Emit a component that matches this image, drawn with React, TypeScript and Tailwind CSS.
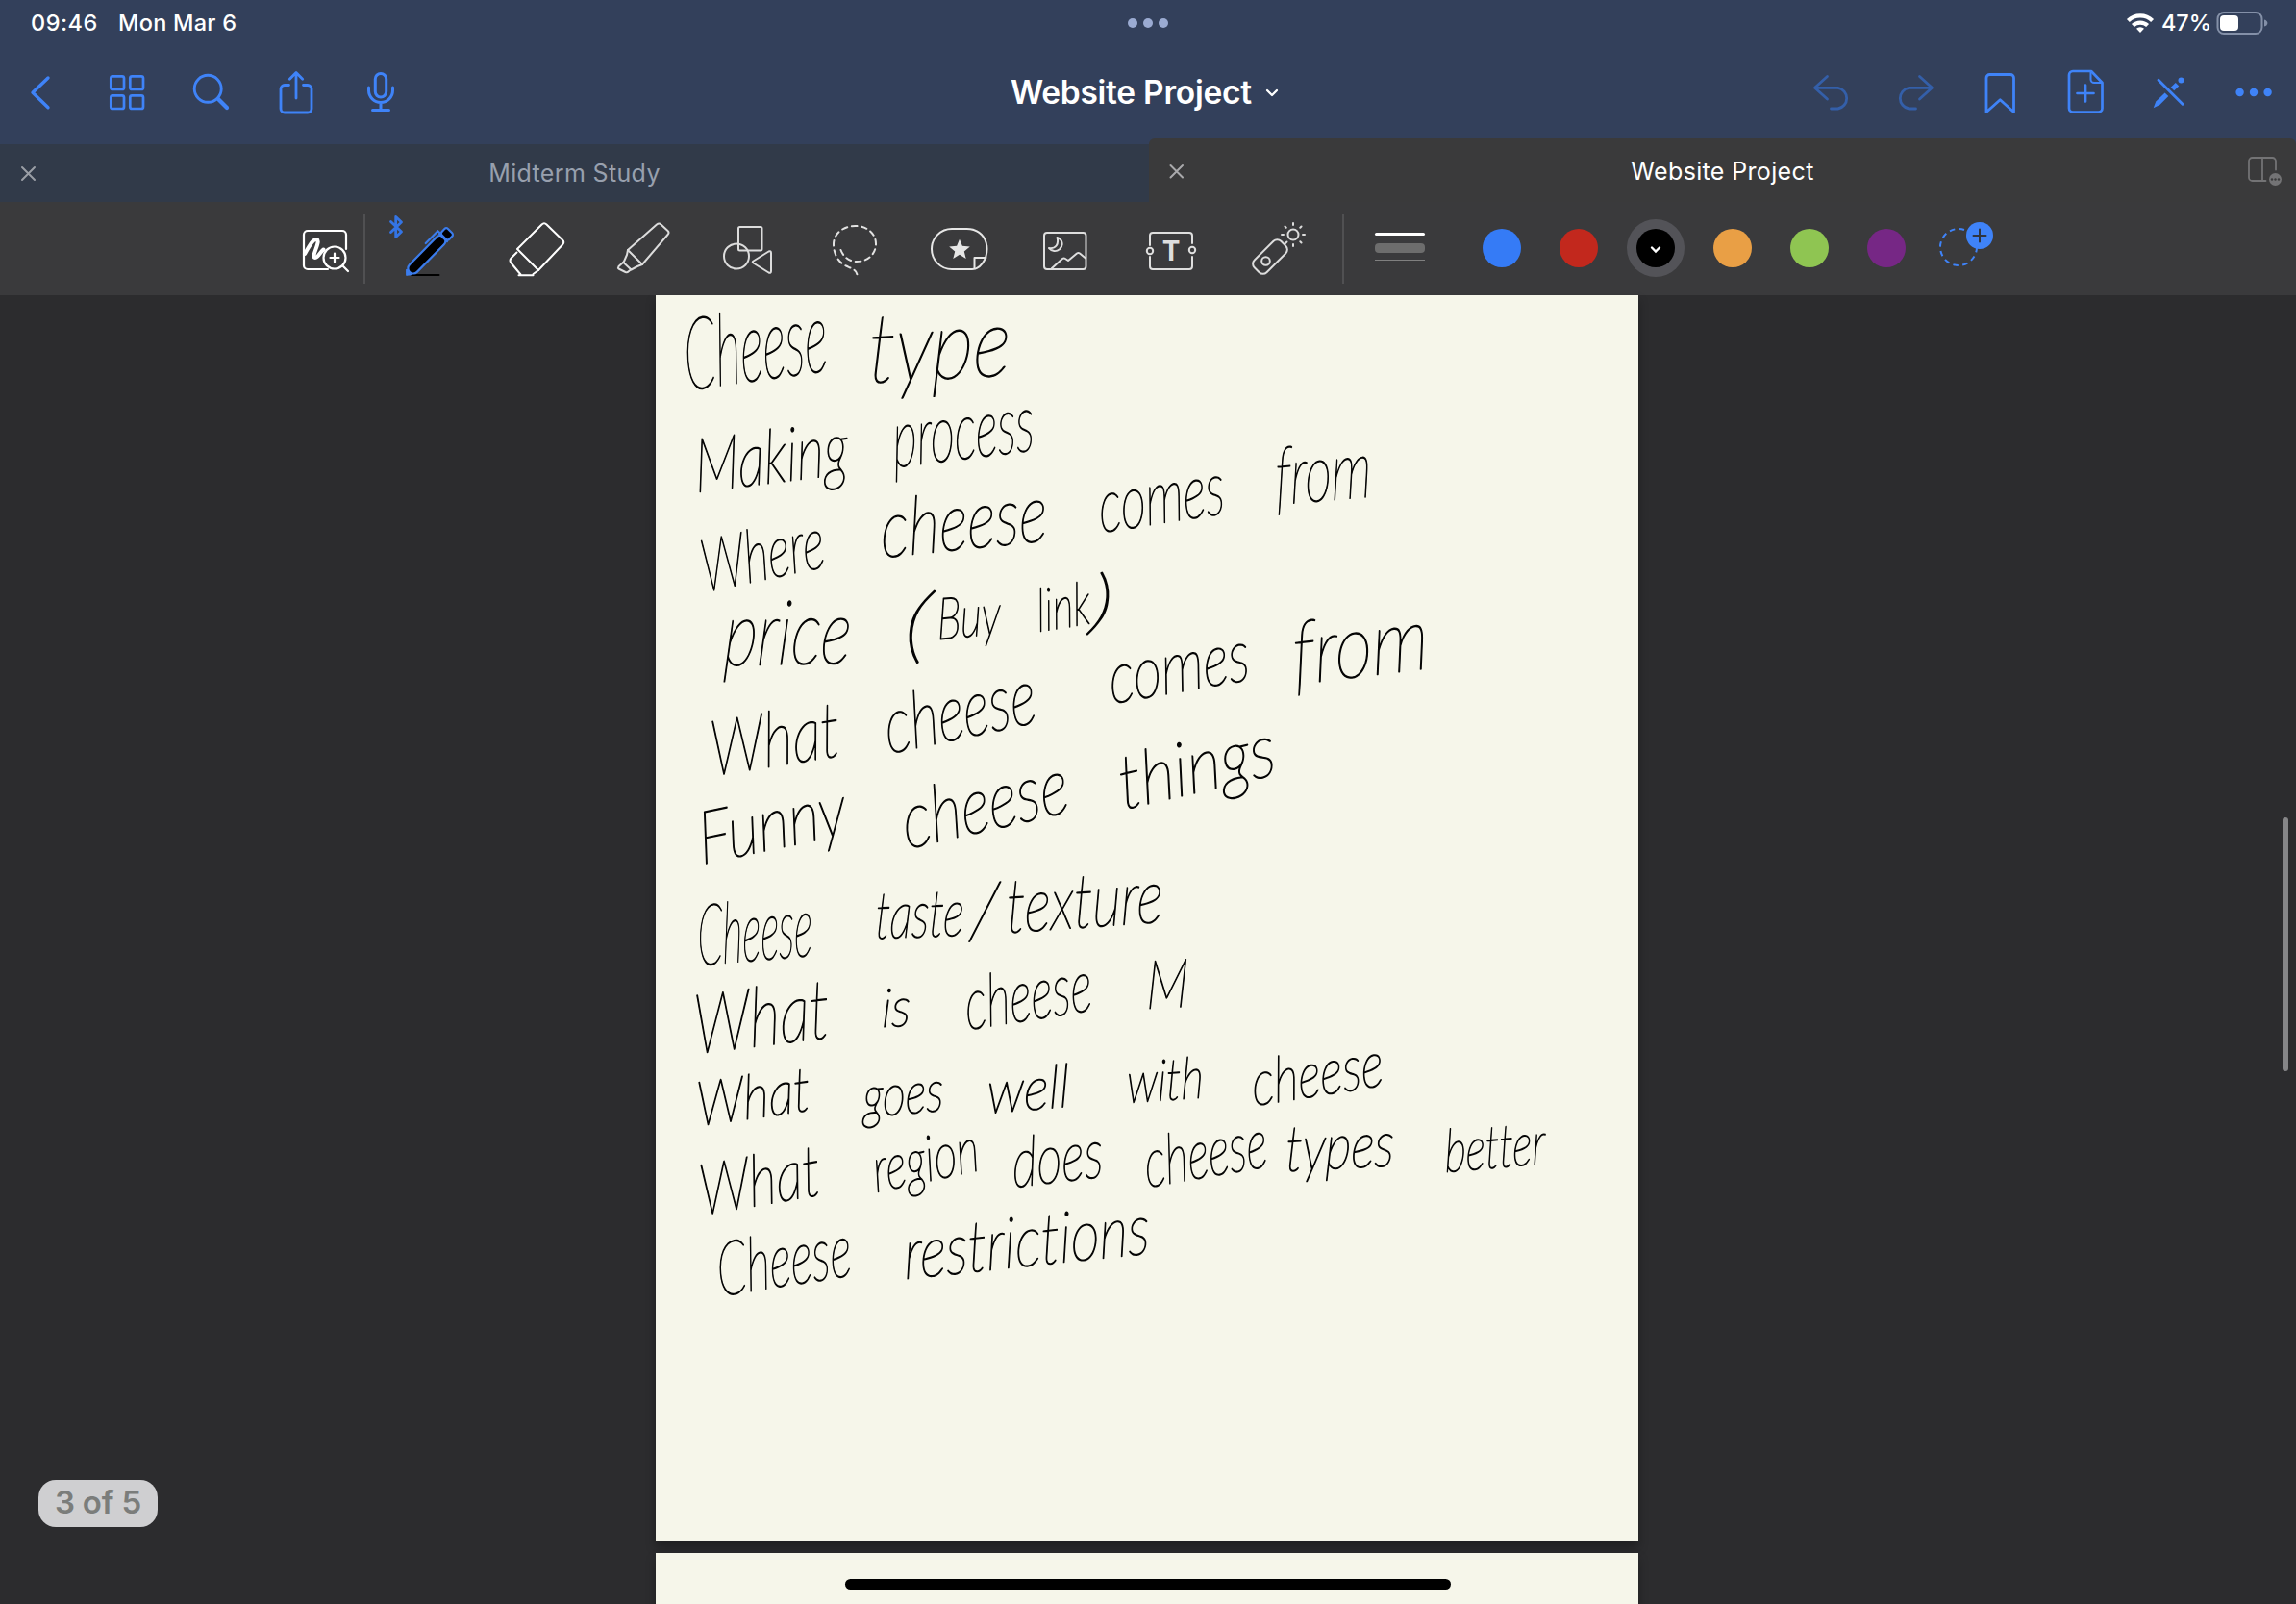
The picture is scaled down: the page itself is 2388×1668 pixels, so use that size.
import type { ReactNode } from "react";

const BLUE = "#3f83f8";

/** A slot of a bar: the drawing's coordinates are the window's own pixels. */
function Slot({ x, y, w, h, label, children }: { x: number; y: number; w: number; h: number; label: string; children?: ReactNode }) {
  return (
    <svg
      className="block shrink-0"
      width={w}
      height={h}
      viewBox={`${x} ${y} ${w} ${h}`}
      fill="none"
      strokeLinecap="round"
      strokeLinejoin="round"
      aria-label={label}
    >
      {children}
    </svg>
  );
}

function StatusBar() {
  return (
    <div className="flex h-12 shrink-0 items-center pl-8 text-[23.5px] font-medium text-white">
      <div className="flex w-[1141px] items-center">
        <span className="w-[91px] tracking-[0.5px]">09:46</span>
        <span className="tracking-[0.25px]">Mon Mar 6</span>
      </div>
      <div className="flex gap-1.5">
        <span className="size-2.5 rounded-full bg-[#9babd2]" />
        <span className="size-2.5 rounded-full bg-[#9babd2]" />
        <span className="size-2.5 rounded-full bg-[#9babd2]" />
      </div>
      <div className="ml-auto flex items-center">
        <Slot x={2209} y={0} w={39} h={48} label="Wi-Fi">
          <g stroke="#fff" strokeWidth="4.2" strokeLinecap="butt">
            <path d="M2213.4 21.4a18.2 18.2 0 0 1 25.2 0" />
            <path d="M2218.4 26.6a11 11 0 0 1 15.2 0" />
          </g>
          <path d="M2226 34l-4-4.2a5.8 5.8 0 0 1 8 0z" fill="#fff" />
        </Slot>
        <span className="w-14 tracking-[-0.1px]">47%</span>
        <Slot x={2304} y={0} w={84} h={48} label="Battery">
          <rect x="2306.5" y="13" width="46" height="22" rx="6.5" stroke="#8490a8" strokeWidth="2" />
          <rect x="2309" y="16" width="19" height="16" rx="4" fill="#fff" />
          <path d="M2355 20.5c4.5 1 4.5 6 0 7z" fill="#8490a8" />
        </Slot>
      </div>
    </div>
  );
}

function NavBar() {
  return (
    <div className="flex h-24 shrink-0 items-center">
      <div className="flex w-[1051px]">
        <Slot x={0} y={48} w={90} h={96} label="Back">
          <path d="M50 81L34 96.3l16 15.5" stroke={BLUE} strokeWidth="3.4" />
        </Slot>
        <Slot x={90} y={48} w={86} h={96} label="Pages">
          <g stroke={BLUE} strokeWidth="2.7">
            <rect x="115.3" y="79.3" width="13.7" height="13.7" rx="2" />
            <rect x="135.3" y="79.3" width="13.7" height="13.7" rx="2" />
            <rect x="115.3" y="99.3" width="13.7" height="13.7" rx="2" />
            <rect x="135.3" y="99.3" width="13.7" height="13.7" rx="2" />
          </g>
        </Slot>
        <Slot x={176} y={48} w={88} h={96} label="Search">
          <circle cx="216.2" cy="92.3" r="14" stroke={BLUE} strokeWidth="2.9" />
          <path d="M227 103l9 9" stroke={BLUE} strokeWidth="4.2" />
        </Slot>
        <Slot x={264} y={48} w={88} h={96} label="Share">
          <g stroke={BLUE} strokeWidth="2.8">
            <path d="M300.5 88.5H296a4 4 0 0 0-4 4V113a4 4 0 0 0 4 4h24a4 4 0 0 0 4-4V92.5a4 4 0 0 0-4-4h-4.5" />
            <path d="M308 102V76M301.3 82.3L308 75.6l6.7 6.7" />
          </g>
        </Slot>
        <Slot x={352} y={48} w={88} h={96} label="Record">
          <g stroke={BLUE} strokeWidth="3">
            <rect x="390.3" y="76.4" width="11.4" height="24.6" rx="5.7" />
            <path d="M383.5 91v3a12.5 12.5 0 0 0 25 0v-3M396 107v7M387.5 114.5h17" />
          </g>
        </Slot>
      </div>
      <div className="flex items-center gap-3 text-white">
        <h1 className="text-[33.5px] font-semibold tracking-[-0.25px] whitespace-nowrap">Website Project</h1>
        <Slot x={1314} y={84} w={18} h={24} label="Open menu">
          <path d="M1318 94l5 5 5-5" stroke="#fff" strokeWidth="2.3" />
        </Slot>
      </div>
      <div className="ml-auto flex">
        <Slot x={1862} y={48} w={88} h={96} label="Undo">
          <path d="M1900.5 79.5L1887.5 91.3l13 11.7M1888 91.3h23.5a11 11 0 0 1 0 21.7h-7" stroke="#345fa9" strokeWidth="2.8" />
        </Slot>
        <Slot x={1950} y={48} w={88} h={96} label="Redo">
          <path d="M1996.5 79.5L2009.5 91.3l-13 11.7M2009 91.3h-23.5a11 11 0 0 0 0 21.7h7" stroke="#345fa9" strokeWidth="2.8" />
        </Slot>
        <Slot x={2038} y={48} w={86} h={96} label="Bookmark">
          <path d="M2066 116.5V81a3.5 3.5 0 0 1 3.5-3.5h21.5a3.5 3.5 0 0 1 3.5 3.5v35.5l-14.2-12.8z" stroke={BLUE} strokeWidth="2.8" />
        </Slot>
        <Slot x={2124} y={48} w={88} h={96} label="Add page">
          <g stroke={BLUE} strokeWidth="2.7">
            <path d="M2175 74h-19a4 4 0 0 0-4 4v34.5a4 4 0 0 0 4 4h26.5a4 4 0 0 0 4-4V86z" />
            <path d="M2174.5 75v7.5a3.5 3.5 0 0 0 3.5 3.5h7.5" strokeWidth="2" />
            <path d="M2160.5 97h17M2169 88.5v17" />
          </g>
        </Slot>
        <Slot x={2212} y={48} w={88} h={96} label="Pen mode">
          <path d="M2239.7 112.2l2.6-6.6 9.3-9.2 3.7 3.6-9 9z" fill={BLUE} />
          <path d="M2259.5 92.5l5-4.8" stroke={BLUE} strokeWidth="5" strokeLinecap="butt" />
          <circle cx="2268.5" cy="83.5" r="3" fill={BLUE} />
          <path d="M2245 83.2l25 25" stroke={BLUE} strokeWidth="2.9" />
        </Slot>
        <Slot x={2300} y={48} w={88} h={96} label="More">
          <g fill={BLUE}>
            <circle cx="2329.6" cy="96" r="4.2" />
            <circle cx="2344" cy="96" r="4.2" />
            <circle cx="2358.6" cy="96" r="4.2" />
          </g>
        </Slot>
      </div>
    </div>
  );
}

function TabBar() {
  return (
    <div className="flex h-[66px] shrink-0 items-end">
      <div className="flex h-[60px] w-[1195px] items-center bg-[#313a49]">
        <Slot x={0} y={150} w={60} h={60} label="Close tab">
          <path d="M23 174l13 13M36 174l-13 13" stroke="#9a9ea6" strokeWidth="2" />
        </Slot>
        <span className="mr-[60px] flex-1 pt-px text-center text-[25px] tracking-[0.35px] text-[#98a0ae]">Midterm Study</span>
      </div>
      <div className="flex h-[66px] flex-1 items-center rounded-t-md bg-[#3a3a3b]">
        <Slot x={1195} y={144} w={60} h={66} label="Close tab">
          <path d="M1217.5 172l12.5 12.5M1230 172l-12.5 12.5" stroke="#a9a9ab" strokeWidth="2" />
        </Slot>
        <span className="ml-[13px] flex-1 pt-[3px] text-center text-[25px] tracking-[0.35px] text-white">Website Project</span>
        <Slot x={2315} y={144} w={73} h={66} label="Split view">
          <path d="M2356.5 188h-14a3.5 3.5 0 0 1-3.5-3.5v-17a3.5 3.5 0 0 1 3.5-3.5h21a3.5 3.5 0 0 1 3.5 3.5v9M2353 164v24" stroke="#737375" strokeWidth="1.8" />
          <circle cx="2366.5" cy="186.5" r="6.5" fill="#737375" />
          <g fill="#3a3a3b">
            <circle cx="2363" cy="186.5" r="1.2" />
            <circle cx="2366.5" cy="186.5" r="1.2" />
            <circle cx="2370" cy="186.5" r="1.2" />
          </g>
        </Slot>
      </div>
    </div>
  );
}

function Tool({ x, w, label, children }: { x: number; w: number; label: string; children?: ReactNode }) {
  return (
    <Slot x={x} y={210} w={w} h={97} label={label}>
      {children}
    </Slot>
  );
}

const SWATCHES = ["#357bf6", "#c2281d", "#000000", "#e99f45", "#8fc552", "#762785"];

function ToolBar() {
  return (
    <div className="flex h-[97px] shrink-0 items-center bg-[#3a3a3c] pl-[300px]">
      <Tool x={300} w={78} label="Zoom window">
        <g stroke="#fff" strokeWidth="2.2">
          <path d="M360 259v-15a4 4 0 0 0-4-4h-36a4 4 0 0 0-4 4v32a4 4 0 0 0 4 4h21" />
          <circle cx="348" cy="268" r="11.5" />
          <path d="M356.5 276.5l5.5 5.5M343.5 268h9M348 263.5v9" />
          <path d="M317 264c5-9 9-16 12.5-15 4.5 1.5-5.5 17-2.5 18.8 3 1.5 6-5.8 9.5-8.3" strokeWidth="4" />
        </g>
      </Tool>
      <div className="h-[72px] w-0.5 bg-[#505052]" />
      <Tool x={380} w={125} label="Pen">
        <path d="M406.5 230.5l11 10.5-5.8 5.5v-21l5.8 5.5-11 10.5" stroke="#3474e4" strokeWidth="2.8" />
        <path d="M428 286h28.5" stroke="#000" strokeWidth="2" />
        <g transform="translate(422.5 286.5) rotate(-45.5)" stroke="#3b7cec" strokeWidth="2.2">
          <path d="M1 0l3.5-3.5v6z" fill="#3b7cec" />
          <rect x="5" y="-5.5" width="51" height="11" rx="5.5" fill="#000" />
          <rect x="56" y="-5.5" width="9" height="11" rx="2.5" fill="#000" />
          <path d="M55 -5.5v11M38 -9h18v4" />
        </g>
      </Tool>
      <Tool x={505} w={110} label="Eraser">
        <g stroke="#fff" strokeWidth="2">
          <path d="M538 259l25.5-25.5q2.5-2.5 5 0l16.5 16q2.5 2.5 0 5L560 281z" />
          <path d="M537.5 262.5l-5.5 5.5q-3 3 0 6l9.5 11.5M560 281l-5.5 4M539.5 286.3h15" />
        </g>
      </Tool>
      <Tool x={615} w={107} label="Highlighter">
        <g stroke="#dcdcdc" strokeWidth="2">
          <path d="M653 260l30-26.5q2.5-2 4.5 0l7 6.5q2 2 0 4L668 275z" />
          <path d="M653 260l-1 5-3.5 8 8 7.5 6.5-3.5 5-2" />
          <path d="M648.5 272.5l-5 4.5q-1 1.5 0 2.5l7 3.5q2 .5 3-.5l3-2.5" />
        </g>
      </Tool>
      <Tool x={722} w={110} label="Shapes">
        <g stroke="#dcdcdc" strokeWidth="2">
          <rect x="768" y="236" width="24.5" height="24.5" rx="1.5" />
          <circle cx="766" cy="266.5" r="13" />
          <path d="M783.5 271.5l16-10q2.5-1 2.5 1.5v19q0 2.5-2.5 1.5l-16-10q-1.5-1 0-2z" />
        </g>
      </Tool>
      <Tool x={832} w={113} label="Lasso">
        <path
          d="M874.5 260c3 8 9.5 12 16.5 12 12 0 20-8 20-18.5s-9-18.5-21.5-18.5S867 243 867 254c0 10 5 19 13 22.5 5 2.5 11 4 11.5 9.5"
          stroke="#e2e2e2"
          strokeWidth="2"
          strokeDasharray="5.5 4.7"
        />
      </Tool>
      <Tool x={945} w={110} label="Stickers">
        <path d="M1011 280H990a20.5 20.5 0 0 1 0-42h15.5c13 0 21 9 21 21 0 11-7 21-15.5 21z" stroke="#e6e6e6" strokeWidth="2" />
        <path d="M1013.5 279v-11h12" stroke="#e6e6e6" strokeWidth="2" />
        <path d="M998 248.7l2.9 7.1 7.9.6-6 5 1.9 7.6-6.7-4.2-6.7 4.2 1.9-7.6-6-5 7.9-.6z" fill="#e6e6e6" />
      </Tool>
      <Tool x={1055} w={105} label="Image">
        <g stroke="#dedede" strokeWidth="2">
          <rect x="1086" y="242" width="43.5" height="38" rx="3" />
          <path d="M1094 279l11-10q1.5-1 3 0l3 2 9-7.5q1.5-1 3 0l6 5M1099.5 247c2 7-1.5 12-8.5 11 3 3.5 7.5 4 11 1.3 4.2-4 3.3-10.3-2.5-12.3z" />
        </g>
      </Tool>
      <Tool x={1160} w={115} label="Text">
        <g stroke="#dedede" strokeWidth="2">
          <path d="M1196 255v-10a3 3 0 0 1 3-3h38a3 3 0 0 1 3 3v8M1240 267v10a3 3 0 0 1-3 3h-38a3 3 0 0 1-3-3v-10" />
          <circle cx="1196" cy="261" r="3.2" />
          <circle cx="1240" cy="260" r="3.2" />
        </g>
        <text x="1218" y="271" textAnchor="middle" fill="#dedede" fontFamily="Inter, sans-serif" fontWeight="700" fontSize="28">
          T
        </text>
      </Tool>
      <Tool x={1275} w={121} label="Laser pointer">
        <g stroke="#dcdcdc" strokeWidth="2">
          <rect x="-19.5" y="-9" width="39" height="18" rx="5.5" transform="translate(1321 267) rotate(-45)" />
          <circle cx="1316.5" cy="271.5" r="4.3" />
          <path d="M1336.5 253.5l2-2" />
          <circle cx="1345" cy="244" r="5.5" />
          <path d="M1345 232v2M1345 254v2M1333 244h2M1355 244h2M1336.5 235.5l1.2 1.2M1352.3 251.3l1.2 1.2M1353.5 235.5l-1.2 1.2" />
        </g>
      </Tool>
      <div className="h-[72px] w-0.5 bg-[#505052]" />
      <div className="mb-1 ml-8 flex w-[52px] flex-col" aria-label="Stroke thickness">
        <span className="h-[3px] rounded-sm bg-white" />
        <span className="mt-2 h-2.5 rounded bg-[#6d6d6d]" />
        <span className="mt-[7px] h-px bg-[#808080]" />
      </div>
      <div className="mb-px ml-10 flex items-center">
        {SWATCHES.map((color) => (
          <button key={color} className="flex w-20 items-center justify-center" aria-label={color}>
            {color === "#000000" ? (
              <span className="flex size-[60px] items-center justify-center rounded-full bg-[#535358]">
                <span className="flex size-10 items-center justify-center rounded-full bg-black">
                  <svg width="12" height="10" viewBox="0 0 12 10" fill="none" className="mt-1">
                    <path d="M2 2.5l4 4 4-4" stroke="#fff" strokeWidth="2.4" strokeLinecap="round" />
                  </svg>
                </span>
              </span>
            ) : (
              <span className="size-10 rounded-full" style={{ backgroundColor: color }} />
            )}
          </button>
        ))}
      </div>
      <Tool x={2002} w={100} label="Add colour">
        <circle cx="2037" cy="257" r="19" stroke={BLUE} strokeWidth="2" strokeDasharray="5.5 4.45" strokeLinecap="butt" />
        <circle cx="2059" cy="245" r="14" fill={BLUE} />
        <path d="M2052.5 245h13M2059 238.5v13" stroke="#2f3540" strokeWidth="2" />
      </Tool>
    </div>
  );
}

type Word = { t: string; x: number; y: number; w: number; r: number; s: number };

/** Handwritten words: left end of the baseline, length, slope and size. */
const WORDS: Word[] = [
  { t: "Cheese", x: 714, y: 406, w: 150, r: -8, s: 104 },
  { t: "type", x: 903, y: 398, w: 148, r: -3, s: 100 },
  { t: "Making", x: 724, y: 512, w: 160, r: -7, s: 78 },
  { t: "process", x: 930, y: 486, w: 148, r: -7, s: 84 },
  { t: "Where", x: 733, y: 616, w: 130, r: -12, s: 76 },
  { t: "cheese", x: 917, y: 580, w: 174, r: -6, s: 84 },
  { t: "comes", x: 1145, y: 554, w: 132, r: -9, s: 78 },
  { t: "from", x: 1327, y: 525, w: 100, r: -5, s: 84 },
  { t: "price", x: 752, y: 692, w: 132, r: -1, s: 94 },
  { t: "(", x: 938, y: 679, w: 28, r: 0, s: 86 },
  { t: "Buy", x: 975, y: 665, w: 66, r: -5, s: 60 },
  { t: "link", x: 1080, y: 657, w: 56, r: -9, s: 62 },
  { t: ")", x: 1132, y: 651, w: 24, r: 0, s: 74 },
  { t: "What", x: 741, y: 807, w: 136, r: -9, s: 80 },
  { t: "cheese", x: 924, y: 784, w: 160, r: -12, s: 82 },
  { t: "comes", x: 1156, y: 732, w: 148, r: -10, s: 76 },
  { t: "from", x: 1346, y: 712, w: 142, r: -7, s: 92 },
  { t: "Funny", x: 730, y: 899, w: 156, r: -12, s: 76 },
  { t: "cheese", x: 943, y: 883, w: 176, r: -13, s: 82 },
  { t: "things", x: 1168, y: 842, w: 166, r: -13, s: 78 },
  { t: "Cheese", x: 726, y: 1004, w: 120, r: -5, s: 88 },
  { t: "taste", x: 910, y: 976, w: 92, r: -2, s: 68 },
  { t: "/", x: 1008, y: 976, w: 28, r: 0, s: 82 },
  { t: "texture", x: 1047, y: 970, w: 163, r: -4, s: 78 },
  { t: "What", x: 723, y: 1096, w: 142, r: -7, s: 86 },
  { t: "is", x: 917, y: 1068, w: 30, r: -3, s: 56 },
  { t: "cheese", x: 1006, y: 1071, w: 133, r: -9, s: 76 },
  { t: "M", x: 1192, y: 1049, w: 44, r: -3, s: 70 },
  { t: "What", x: 726, y: 1171, w: 119, r: -8, s: 64 },
  { t: "goes", x: 898, y: 1162, w: 84, r: -5, s: 60 },
  { t: "well", x: 1027, y: 1158, w: 86, r: -5, s: 62 },
  { t: "with", x: 1172, y: 1147, w: 80, r: -4, s: 60 },
  { t: "cheese", x: 1304, y: 1150, w: 138, r: -9, s: 66 },
  { t: "What", x: 730, y: 1264, w: 127, r: -10, s: 74 },
  { t: "region", x: 911, y: 1240, w: 112, r: -12, s: 66 },
  { t: "does", x: 1054, y: 1235, w: 95, r: -7, s: 72 },
  { t: "cheese", x: 1193, y: 1235, w: 129, r: -10, s: 72 },
  { t: "types", x: 1337, y: 1218, w: 113, r: -3, s: 66 },
  { t: "better", x: 1503, y: 1219, w: 105, r: -5, s: 62 },
  { t: "Cheese", x: 748, y: 1348, w: 141, r: -9, s: 78 },
  { t: "restrictions", x: 941, y: 1330, w: 257, r: -6, s: 74 },
];

function Note() {
  return (
    <svg
      className="block overflow-visible [font-variant-ligatures:none]"
      width="1022"
      height="1296"
      viewBox="682 307 1022 1296"
      fill="#050505"
      stroke="#050505"
      strokeWidth="1.4"
      strokeLinejoin="round"
      fontFamily="Lato, sans-serif"
      fontStyle="italic"
      fontWeight="100"
    >
      {WORDS.map((word) => (
        <text
          key={`${word.x}-${word.y}`}
          transform={`translate(${word.x} ${word.y}) rotate(${word.r}) skewX(-4)`}
          fontSize={word.s}
          textLength={word.w}
          lengthAdjust="spacingAndGlyphs"
        >
          {word.t}
        </text>
      ))}
    </svg>
  );
}

export default function App() {
  return (
    <div className="flex h-[1668px] w-[2388px] flex-col overflow-hidden bg-[#33405b] font-['Inter',sans-serif]">
      <StatusBar />
      <NavBar />
      <TabBar />
      <ToolBar />
      <main className="relative flex flex-1 flex-col bg-[#2c2c2e] pl-[682px]">
        <section className="h-[1296px] w-[1022px] shrink-0 bg-[#f6f6ea] shadow-[0_6px_10px_rgba(0,0,0,0.3)]">
          <Note />
        </section>
        <section className="mt-3 h-[53px] w-[1022px] shrink-0 bg-[#f6f6ea] shadow-[0_6px_10px_rgba(0,0,0,0.3)]" />
        <div className="absolute bottom-20 left-10 flex h-[49px] w-[124px] items-center justify-center rounded-[18px] bg-[#cfcfd1] pb-0.5 text-[33px] font-semibold tracking-[-0.2px] text-[#7b7d7b]">
          3 of 5
        </div>
        <div className="absolute top-[543px] right-2 h-[264px] w-1.5 rounded-full bg-[#868688]" />
        <div className="absolute bottom-[15px] left-[879px] h-[11px] w-[630px] rounded-full bg-black" />
      </main>
    </div>
  );
}
